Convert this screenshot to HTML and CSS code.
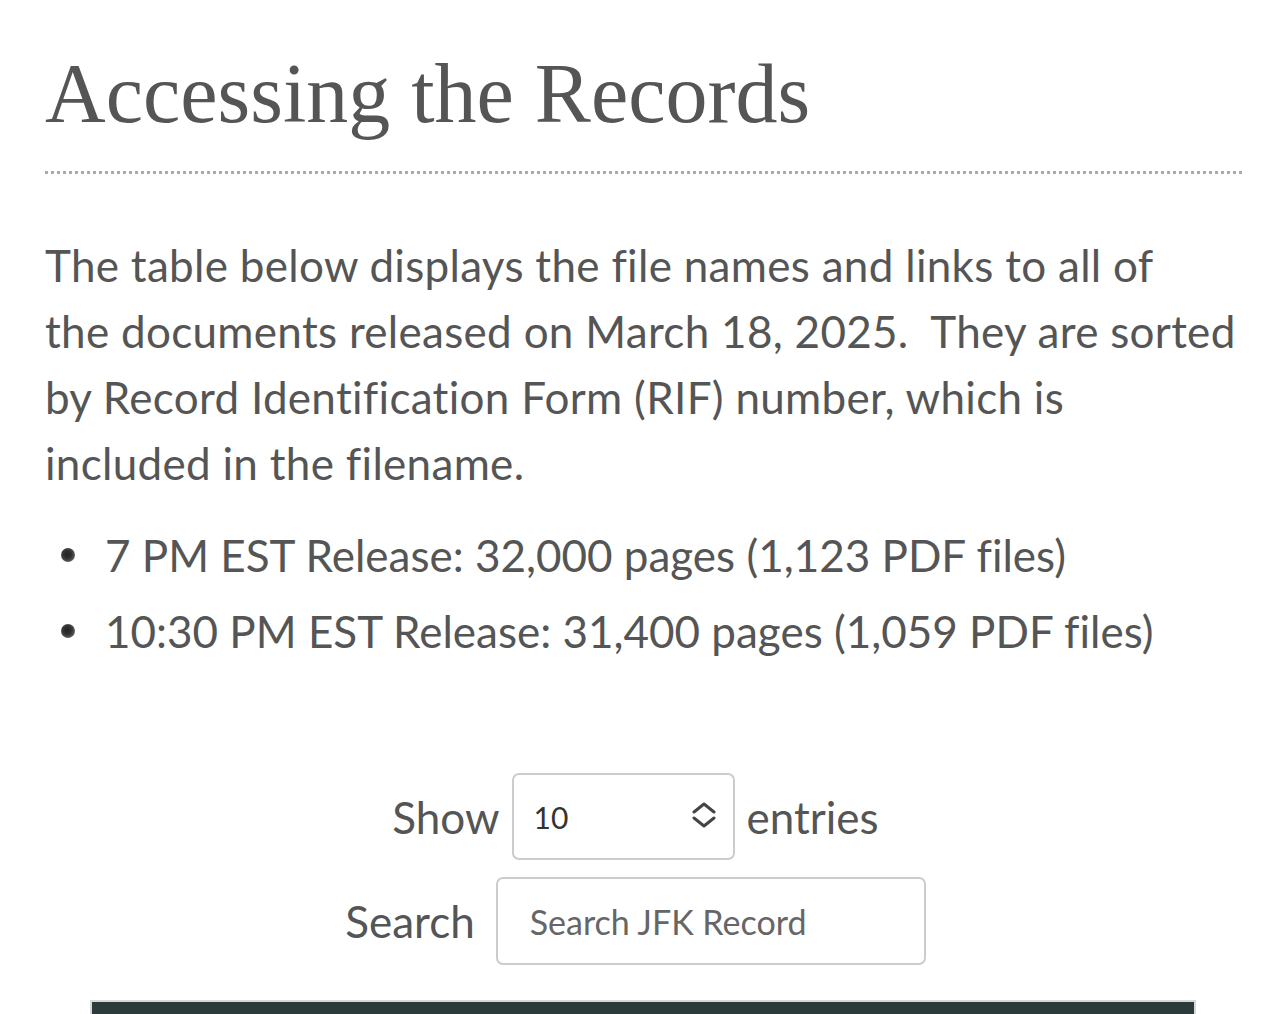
FILE: index.html
```html
<!DOCTYPE html>
<html lang="en">
<head>
    <meta charset="UTF-8">
    <meta name="viewport" content="width=device-width, initial-scale=1.0">
    <title>Accessing the Records</title>
    <link rel="stylesheet" href="styles.css">
</head>
<body>
    <main class="page">
        <h1 class="title">Accessing the Records</h1>
        <p class="intro">The table below displays the file names and links to all of<br>
            the documents released on March 18, 2025.&nbsp; They are sorted<br>
            by Record Identification Form (RIF) number, which is<br>
            included in the filename.</p>
        <ul class="releases">
            <li>7 PM EST Release: 32,000 pages (1,123 PDF files)</li>
            <li>10:30 PM EST Release: 31,400 pages (1,059 PDF files)</li>
        </ul>

        <div class="controls">
            <div class="control-row">
                <label for="length">Show</label>
                <span class="select-wrap">
                    <select id="length" class="length-select">
                        <option>10</option>
                        <option>25</option>
                        <option>50</option>
                        <option>100</option>
                    </select>
                    <!-- up/down chevrons drawn over the native select -->
                    <svg class="chevrons" width="24" height="26" viewBox="0 0 24 26" fill="none" stroke="#444" stroke-width="3" stroke-linecap="round" stroke-linejoin="round">
                        <polyline points="2,10 12,2 22,10"/>
                        <polyline points="2,16 12,24 22,16"/>
                    </svg>
                </span>
                <span>entries</span>
            </div>
            <div class="control-row search-row">
                <label for="search">Search</label>
                <input type="search" id="search" class="search-input" placeholder="Search JFK Record">
            </div>
        </div>

        <div class="table-wrap">
            <div class="table-head"></div>
        </div>
    </main>
</body>
</html>
```

FILE: styles.css
```css
body {
    margin: 0;
    padding: 0;
    background-color: #fff;
    color: #555;
    font-family: Lato, "Liberation Sans", sans-serif;
    font-variant-ligatures: none;
}
.page {
    padding: 0 38px 0 45px;
}
.title {
    margin: 0;
    padding-top: 52px;
    padding-bottom: 35px;
    font-family: "Liberation Serif", serif;
    font-weight: normal;
    font-size: 84px;
    line-height: 1;
    color: #555;
    border-bottom: 3px dotted #aaa;
}
.intro {
    margin: 58px 0 0;
    font-size: 44px;
    line-height: 66px;
    letter-spacing: 0.3px;
    white-space: nowrap;
}
.releases {
    margin: 21px 0 0;
    padding: 0;
    list-style: none;
    font-size: 44px;
    line-height: 76px;
}
.releases li {
    display: flex;
    align-items: center;
}
.releases li::before {
    content: "";
    flex: none;
    width: 14px;
    height: 14px;
    margin: 0 30px 0 16px;
    border-radius: 50%;
    background: radial-gradient(circle at 45% 45%, #222 0%, #333 40%, #555 65%, #999 85%, rgba(255, 255, 255, 0) 100%);
}
.controls {
    margin-top: 104px;
    display: flex;
    flex-direction: column;
    align-items: center;
    gap: 17px;
    padding-right: 16px;
    font-size: 44px;
}
.control-row {
    display: flex;
    align-items: center;
    gap: 12px;
}
.search-row {
    gap: 21px;
}
.select-wrap {
    position: relative;
    display: inline-block;
}
.length-select {
    appearance: none;
    -webkit-appearance: none;
    box-sizing: border-box;
    display: block;
    width: 223px;
    height: 87px;
    padding: 0 0 0 20px;
    border: 2px solid #ccc;
    border-radius: 7px;
    background: #fff;
    font-family: Lato, "Liberation Sans", sans-serif;
    font-size: 30px;
    color: #333;
}
.chevrons {
    position: absolute;
    right: 19px;
    top: 29px;
    pointer-events: none;
}
.search-input {
    width: 430px;
    height: 88px;
    box-sizing: border-box;
    padding: 0 32px;
    border: 2px solid #ccc;
    border-radius: 7px;
    font-family: Lato, "Liberation Sans", sans-serif;
    font-size: 34px;
    color: #444;
}
.search-input::placeholder {
    color: #666;
}
.table-wrap {
    margin: 35px 46px 0 45px;
}
.table-head {
    height: 40px;
    border: 2px solid #d5d9dc;
    background-color: #2b3a3a;
}
```
